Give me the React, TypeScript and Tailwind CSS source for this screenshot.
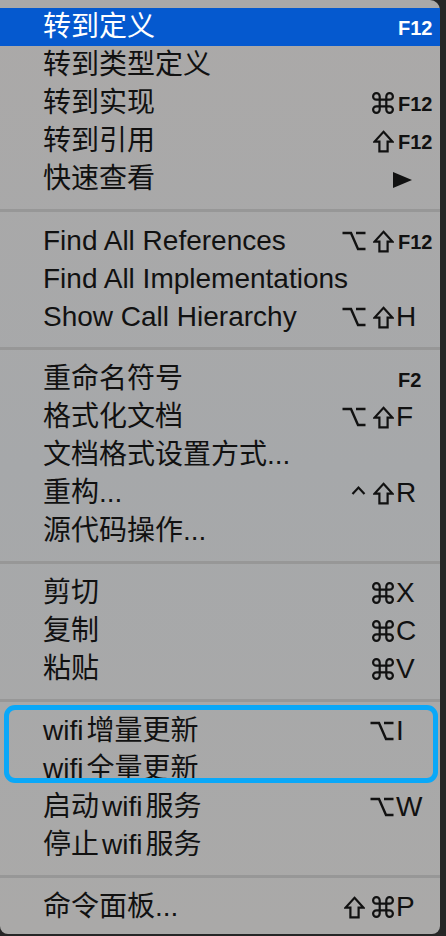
import React from 'react';

type Mod = 'cmd' | 'shift' | 'opt' | 'ctrl';

interface Item {
  label: string;
  mods?: Mod[];
  keyName?: string;
  fkey?: boolean;
  submenu?: boolean;
  active?: boolean;
}

const groups: Item[][] = [
  [
    { label: '转到定义', keyName: 'F12', fkey: true, active: true },
    { label: '转到类型定义' },
    { label: '转到实现', mods: ['cmd'], keyName: 'F12', fkey: true },
    { label: '转到引用', mods: ['shift'], keyName: 'F12', fkey: true },
    { label: '快速查看', submenu: true },
  ],
  [
    { label: 'Find All References', mods: ['opt', 'shift'], keyName: 'F12', fkey: true },
    { label: 'Find All Implementations' },
    { label: 'Show Call Hierarchy', mods: ['opt', 'shift'], keyName: 'H' },
  ],
  [
    { label: '重命名符号', keyName: 'F2', fkey: true },
    { label: '格式化文档', mods: ['opt', 'shift'], keyName: 'F' },
    { label: '文档格式设置方式...' },
    { label: '重构...', mods: ['ctrl', 'shift'], keyName: 'R' },
    { label: '源代码操作...' },
  ],
  [
    { label: '剪切', mods: ['cmd'], keyName: 'X' },
    { label: '复制', mods: ['cmd'], keyName: 'C' },
    { label: '粘贴', mods: ['cmd'], keyName: 'V' },
  ],
  [
    { label: 'wifi增量更新', mods: ['opt'], keyName: 'I' },
    { label: 'wifi全量更新' },
    { label: '启动wifi服务', mods: ['opt'], keyName: 'W' },
    { label: '停止wifi服务' },
  ],
  [{ label: '命令面板...', mods: ['shift', 'cmd'], keyName: 'P' }],
];

const ModIcon = ({ mod }: { mod: Mod }) => {
  if (mod === 'cmd')
    return (
      <svg width="22" height="22" viewBox="2 2 20 20" fill="none" stroke="currentColor" strokeWidth="2">
        <path d="M15 6v12a3 3 0 1 0 3-3H6a3 3 0 1 0 3 3V6a3 3 0 1 0-3 3h12a3 3 0 1 0-3-3" />
      </svg>
    );
  if (mod === 'shift')
    return (
      <svg width="21" height="23" viewBox="0 0 21 23" fill="none" stroke="currentColor" strokeWidth="2.2">
        <path d="M10.5 1.8 19.4 11.6H14.6v9.8H6.4v-9.8H1.6z" />
      </svg>
    );
  if (mod === 'opt')
    return (
      <svg width="24" height="22" viewBox="0 0 24 22" fill="none" stroke="currentColor" strokeWidth="2.4">
        <path d="M0.5 3h8.5l7 16h7.5M14 3h9.5" />
      </svg>
    );
  return (
    <svg width="15" height="22" viewBox="0 0 15 22" fill="none" stroke="currentColor" strokeWidth="2.2">
      <path d="M1.5 12 7.5 5.5 13.5 12" />
    </svg>
  );
};

// put a little air between "wifi" and the Chinese around it
const Label = ({ text }: { text: string }) => {
  const parts = text.split(/(wifi)/).filter(Boolean);
  return (
    <>
      {parts.map((p, i) =>
        p === 'wifi' ? (
          <span key={i} className={`${i > 0 ? 'ml-[3px]' : ''} mr-[3px]`}>
            {p}
          </span>
        ) : (
          <span key={i}>{p}</span>
        )
      )}
    </>
  );
};

const Row = ({ item }: { item: Item }) => (
  <div
    className={`flex items-center h-[38px] pl-[43px] ${
      item.active ? 'bg-[#0559cf] text-white' : 'text-[#111111]'
    }`}
  >
    <span className="flex-1 text-[28px] leading-none whitespace-nowrap pb-[1px]">
      <Label text={item.label} />
    </span>
    {item.mods && (
      <span className="flex items-center justify-end gap-[7px] mr-[2px]">
        {item.mods.map((m, i) => (
          <ModIcon key={i} mod={m} />
        ))}
      </span>
    )}
    <span className="w-[44px] flex items-center">
      {item.submenu ? (
        <svg width="19" height="16" viewBox="0 0 19 16" className="-ml-[3px] mt-[2px]">
          <path d="M0 0 19 8 0 16z" fill="currentColor" />
        </svg>
      ) : item.keyName ? (
        <span
          className={
            item.fkey
              ? 'text-[20px] font-bold leading-none pl-[2px] mt-[2px]'
              : 'text-[28px] leading-none'
          }
        >
          {item.keyName}
        </span>
      ) : null}
    </span>
  </div>
);

const Separator = () => (
  <div className="h-[24px] flex items-center">
    <div className="h-[3px] w-full bg-[#979797]" />
  </div>
);

export default function App() {
  return (
    <div
      className="w-[446px] h-[936px] bg-[#262626] overflow-hidden"
      style={{ fontFamily: '"Liberation Sans", "Noto Sans CJK SC", sans-serif' }}
    >
      <div className="w-[440px] pt-[8px] pb-[8px] rounded-tr-[10px] rounded-b-[8px] bg-linear-to-b from-[#aba9a8] via-[#a6a8aa] to-[#aaa9a8]">
        {groups.map((g, gi) => (
          <React.Fragment key={gi}>
            {gi > 0 && <Separator />}
            {gi === 4 ? (
              <>
                <div className="relative">
                  <Row item={g[0]} />
                  <Row item={g[1]} />
                  <div className="absolute left-[4px] right-[2px] -top-[7px] bottom-[5px] border-[5px] border-[#0aa8f8] rounded-[11px] pointer-events-none" />
                </div>
                {g.slice(2).map((it, i) => (
                  <Row key={i} item={it} />
                ))}
              </>
            ) : (
              g.map((it, i) => <Row key={i} item={it} />)
            )}
          </React.Fragment>
        ))}
      </div>
    </div>
  );
}
